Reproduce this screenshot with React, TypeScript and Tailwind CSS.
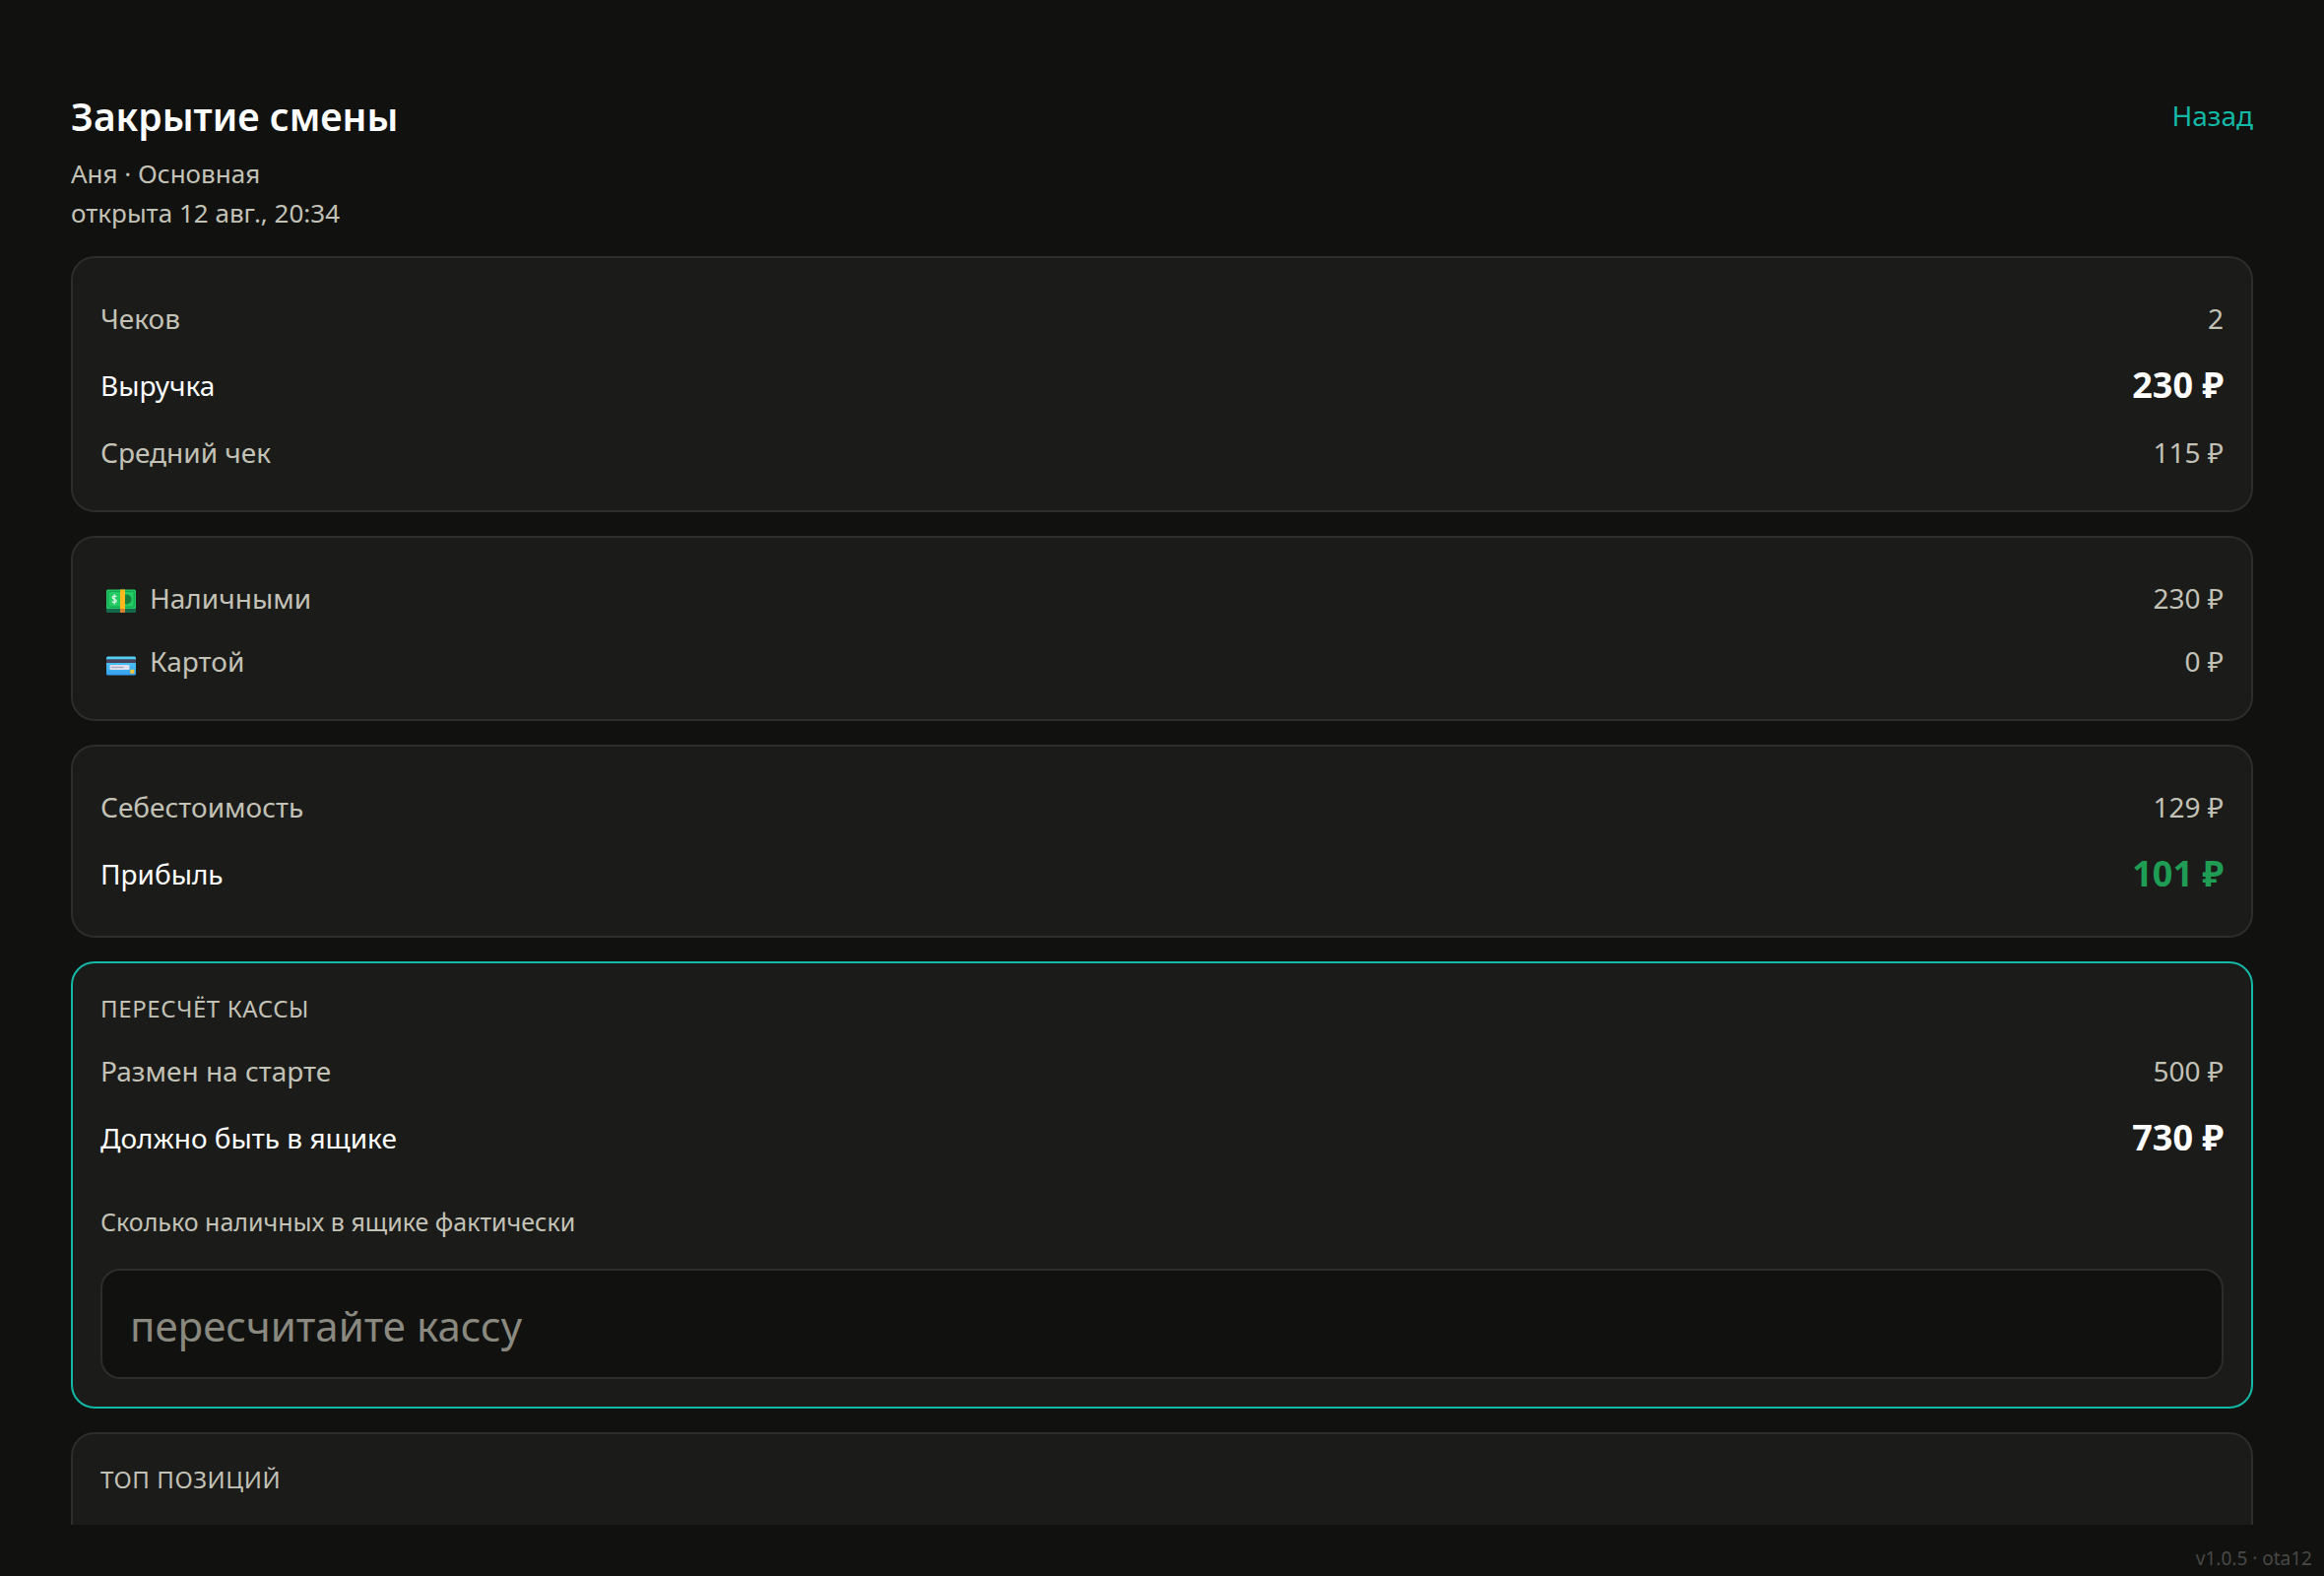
import { ReactNode, useState } from 'react';
import clsx from 'clsx';

function CashIcon() {
  return (
    <svg viewBox="0 0 30 24" className="h-6 w-[30px]" aria-hidden="true">
      <rect x="0" y="6" width="30" height="18" rx="1" fill="#14694a" />
      <rect x="0" y="0.5" width="30" height="19.5" rx="1.5" fill="#22cc63" />
      <rect
        x="1.8"
        y="2.3"
        width="26.4"
        height="15.9"
        rx="1.5"
        fill="none"
        stroke="#169a50"
        strokeWidth="1"
      />
      <circle cx="20.5" cy="10.5" r="5" fill="#15803d" />
      <path
        d="M10.2 8C9.8 6.9 6.2 6.7 6.2 8.7C6.2 10.9 10.3 9.7 10.3 12C10.3 14 6.6 13.8 6 12.6M8.2 5.2V15.4"
        fill="none"
        stroke="#d6f5e0"
        strokeWidth="1.3"
      />
      <rect x="14" y="0.5" width="5" height="19.5" fill="#fdb81e" />
      <rect x="14" y="20" width="5" height="4" fill="#d8802c" />
    </svg>
  );
}

function CardIcon() {
  return (
    <svg viewBox="0 -4 30 24" className="h-6 w-[30px]" aria-hidden="true">
      <defs>
        <linearGradient id="card-body" x1="0" y1="0" x2="0" y2="1">
          <stop offset="0" stopColor="#52d3f2" />
          <stop offset="1" stopColor="#369ff0" />
        </linearGradient>
      </defs>
      <rect x="0" y="0.5" width="30" height="19" rx="1.5" fill="url(#card-body)" />
      <rect x="0" y="3.3" width="30" height="3.7" fill="#46425a" />
      <rect x="3.5" y="9" width="20" height="5" rx="0.8" fill="#dfe0ee" />
      <rect x="5" y="10.8" width="12.5" height="1.3" fill="#a9a5bd" />
      <rect x="24.3" y="13.8" width="4" height="4" rx="0.6" fill="#f6c638" />
    </svg>
  );
}

function Card({
  accent,
  className,
  children,
}: {
  accent?: boolean;
  className?: string;
  children: ReactNode;
}) {
  return (
    <section
      className={clsx(
        'shrink-0 rounded-3xl border-2 bg-[#1b1b19] p-7',
        accent ? 'border-[#14b8a6]' : 'border-[#2d2d2b]',
        className,
      )}
    >
      {children}
    </section>
  );
}

function Row({
  label,
  value,
  icon,
}: {
  label: string;
  value: string;
  icon?: ReactNode;
}) {
  return (
    <div className="flex h-16 items-center justify-between pt-0.5 text-[28px] text-[#c3c2b7]">
      <span className="flex items-center">
        {icon && <span className="ml-1.5 mr-3.5 flex pt-1.5">{icon}</span>}
        {label}
      </span>
      <span>{value}</span>
    </div>
  );
}

function TotalRow({
  label,
  value,
  profit,
}: {
  label: string;
  value: string;
  profit?: boolean;
}) {
  return (
    <div className="flex h-18 items-center justify-between pt-0.5 text-[28px] text-white">
      <span>{label}</span>
      <span
        className={clsx('text-[36px] font-bold', profit && 'text-[#1f9d55]')}
      >
        {value}
      </span>
    </div>
  );
}

function CardTitle({ children }: { children: ReactNode }) {
  return (
    <h2 className="mb-3.5 pt-0.5 text-2xl uppercase tracking-wide text-[#c3c2b7]">
      {children}
    </h2>
  );
}

export default function App() {
  const [counted, setCounted] = useState('');

  return (
    <div className="relative flex h-screen flex-col bg-[#11110f] pb-13 font-['Noto_Sans','Open_Sans',sans-serif]">
      <main className="flex min-h-0 flex-1 flex-col gap-6 overflow-y-auto px-18 pt-23 [scrollbar-width:none]">
        <header className="flex items-start justify-between">
          <div>
            <h1 className="mb-3 text-[39px] leading-13 font-semibold text-white">
              Закрытие смены
            </h1>
            <p className="text-[26px] leading-10 text-[#c3c2b7]">
              Аня · Основная
              <br />
              открыта 12 авг., 20:34
            </p>
          </div>
          <button
            type="button"
            className="text-[28px] leading-[50px] text-[#14b8a6]"
          >
            Назад
          </button>
        </header>

        <Card>
          <Row label="Чеков" value="2" />
          <TotalRow label="Выручка" value="230 ₽" />
          <Row label="Средний чек" value="115 ₽" />
        </Card>

        <Card>
          <Row label="Наличными" value="230 ₽" icon={<CashIcon />} />
          <Row label="Картой" value="0 ₽" icon={<CardIcon />} />
        </Card>

        <Card>
          <Row label="Себестоимость" value="129 ₽" />
          <TotalRow label="Прибыль" value="101 ₽" profit />
        </Card>

        <Card accent>
          <CardTitle>Пересчёт кассы</CardTitle>
          <Row label="Размен на старте" value="500 ₽" />
          <TotalRow label="Должно быть в ящике" value="730 ₽" />
          <label
            htmlFor="counted"
            className="mt-8 mb-[30px] block text-[25px] leading-9 text-[#c3c2b7]"
          >
            Сколько наличных в ящике фактически
          </label>
          <input
            id="counted"
            type="text"
            inputMode="numeric"
            value={counted}
            onChange={(e) => setCounted(e.target.value)}
            placeholder="пересчитайте кассу"
            className="block h-28 w-full rounded-[20px] border-2 border-[#2d2d2b] bg-[#11110f] px-7 pt-0.5 text-[42px] text-white outline-none placeholder:text-[#8a8980]"
          />
        </Card>

        <Card className="min-h-40">
          <CardTitle>Топ позиций</CardTitle>
        </Card>
      </main>

      <span className="absolute right-3 bottom-1.5 text-[19px] leading-6 text-[#484846]">
        v1.0.5 · ota12
      </span>
    </div>
  );
}
